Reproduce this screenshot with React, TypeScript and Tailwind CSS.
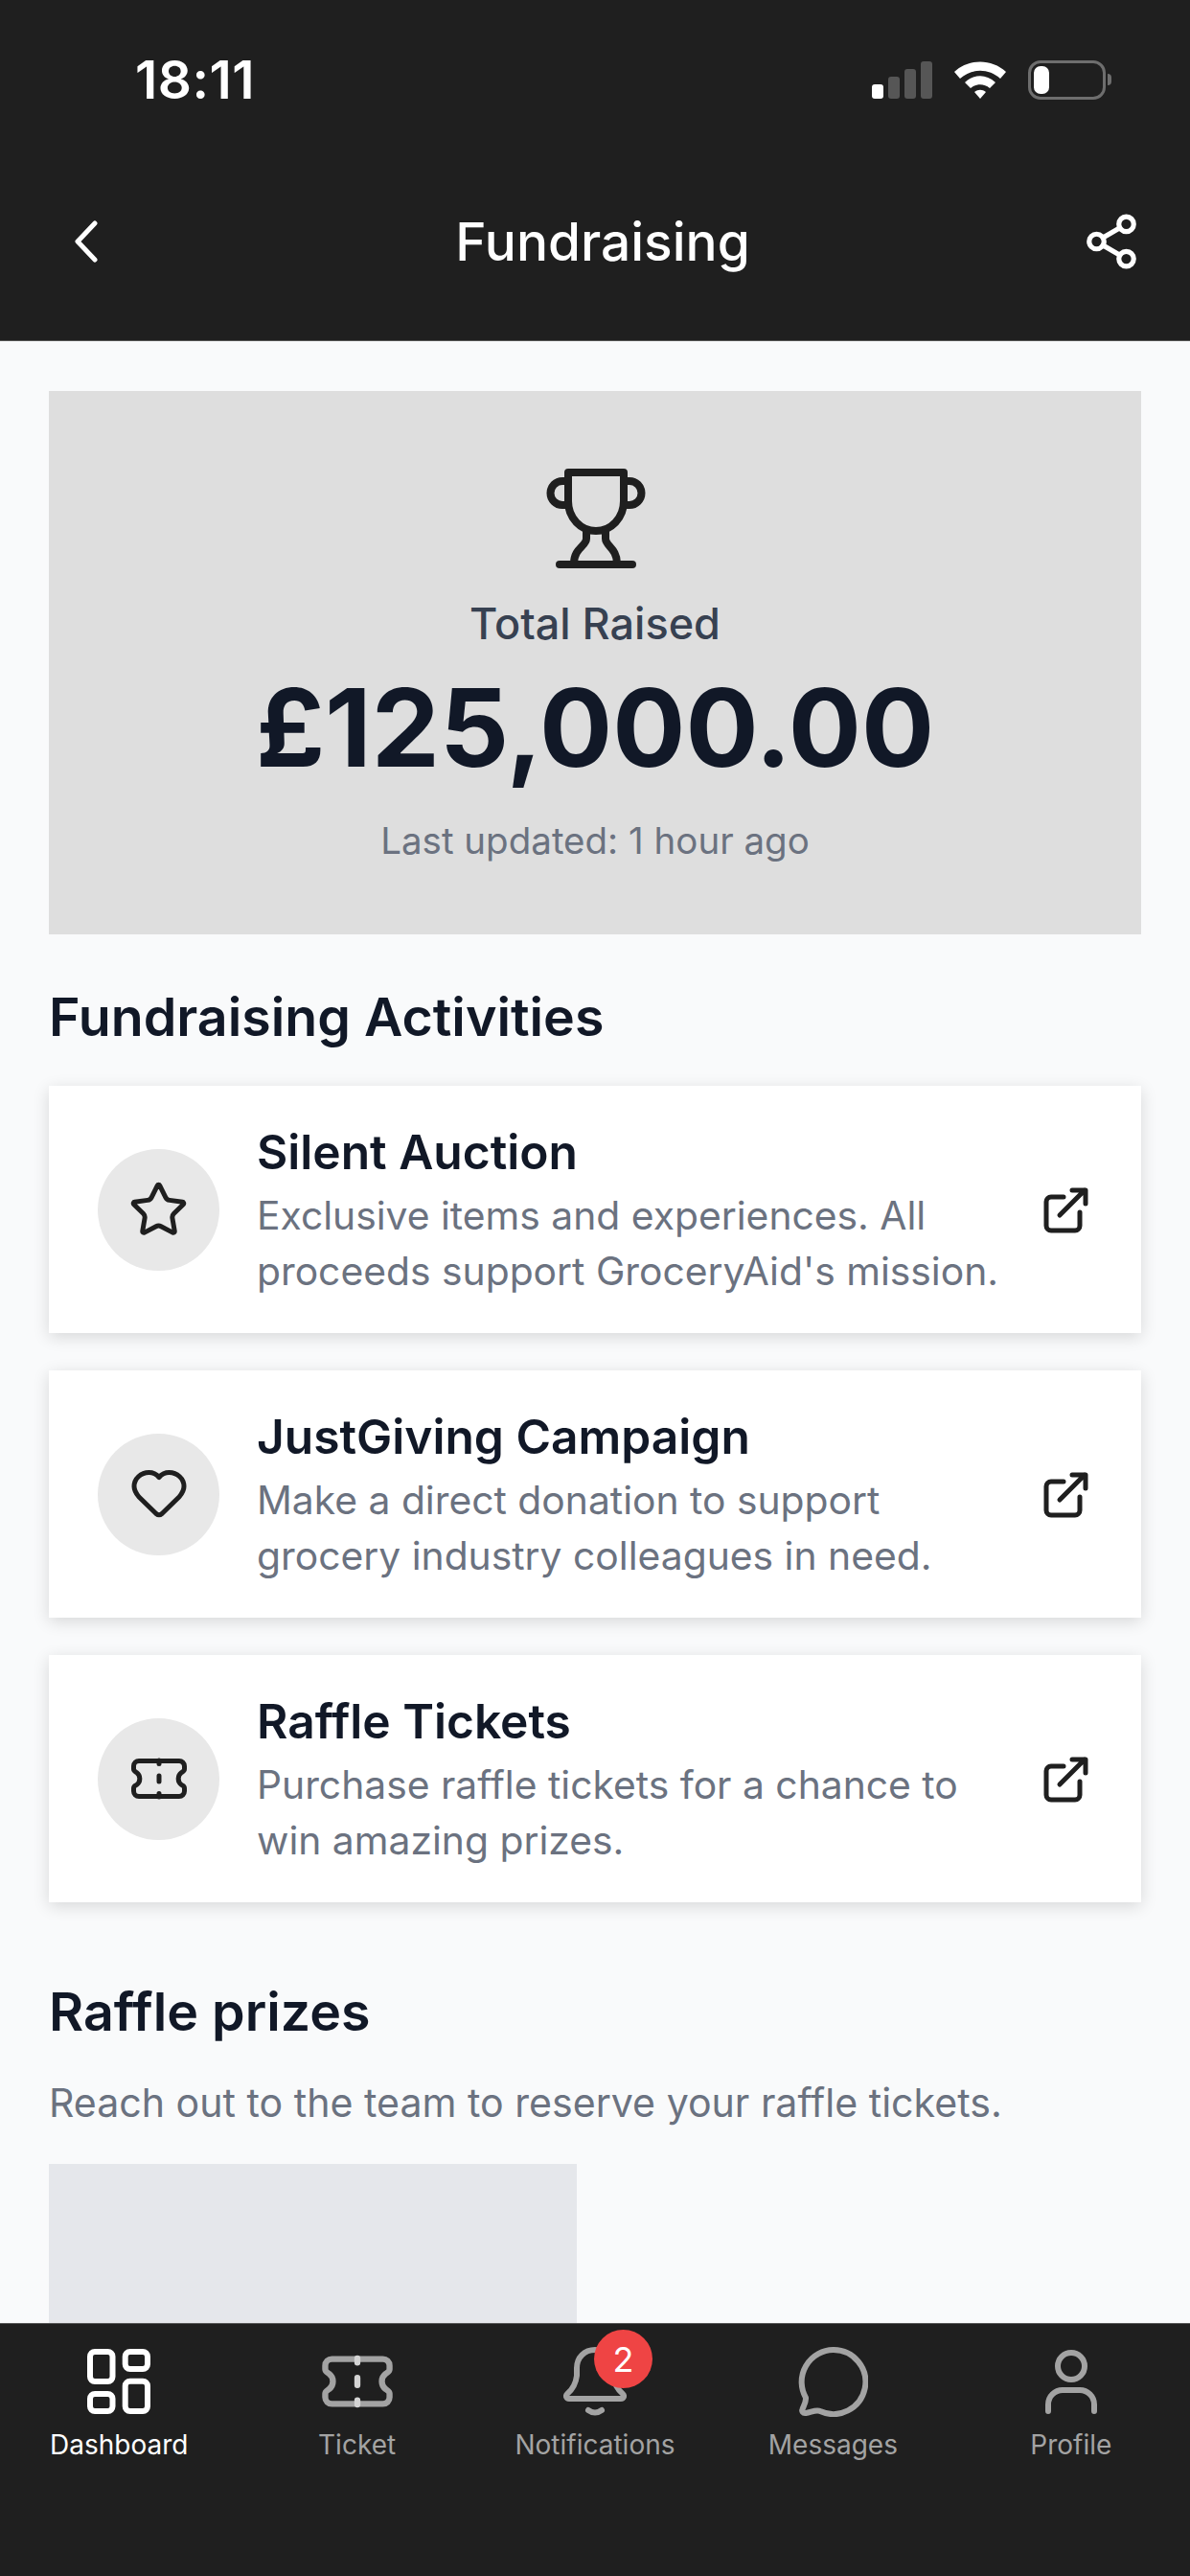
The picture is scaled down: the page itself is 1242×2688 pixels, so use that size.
import type { ReactNode } from 'react';
import { Share2, Star } from 'lucide-react';

function TicketIcon({ size, dashColor }: { size: number; dashColor?: string }) {
  return (
    <svg width={size} height={size} viewBox="0 0 60 60" fill="none" stroke="currentColor" strokeWidth="5" strokeLinecap="round" strokeLinejoin="round">
      <path d="M9 11.5H51a5.5 5.5 0 0 1 5.5 5.5V20C56.5 22 55 22.5 53.5 23.5a8 8 0 0 0 0 13C55 37.5 56.5 38 56.5 40V43a5.5 5.5 0 0 1-5.5 5.5H9a5.5 5.5 0 0 1-5.5-5.5V40C3.5 38 5 37.5 6.5 36.5a8 8 0 0 0 0-13C5 22.5 3.5 22 3.5 20V17a5.5 5.5 0 0 1 5.5-5.5z" />
      <path d="M30 11v3.5M30 27v6M30 45.5V49" stroke={dashColor ?? 'currentColor'} />
    </svg>
  );
}

function HeartIcon() {
  return (
    <svg width="60" height="60" viewBox="0 0 60 60" fill="none" stroke="currentColor" strokeWidth="5" strokeLinejoin="round">
      <path d="M30 12.5C27 9 23.5 7.5 19.5 7.5 11 7.5 4 14 4 22 4 27 6.5 30 9 33L27 50.5Q30 53 33 50.5L51 33C53.5 30 56 27 56 22 56 14 49 7.5 40.5 7.5 36.5 7.5 33 9 30 12.5Z" />
    </svg>
  );
}

function ExternalIcon() {
  return (
    <svg width="60" height="60" viewBox="0 0 60 60" fill="none" stroke="#1f1f1f" strokeWidth="5" strokeLinecap="round" strokeLinejoin="round" className="shrink-0">
      <path d="M28 17H15a5 5 0 0 0-5 5V47a5 5 0 0 0 5 5H40a5 5 0 0 0 5-5V33" />
      <path d="M24 36L50 10M37 10H51V24" />
    </svg>
  );
}

function TrophyIcon() {
  return (
    <svg width="105" height="105" viewBox="0 0 105 105" fill="none" stroke="#1f1f1f" strokeWidth="8" strokeLinecap="round" strokeLinejoin="round">
      <path d="M24 5H82V35a29 31 0 0 1-58 0z" />
      <path d="M24 14H18a12.5 12.5 0 0 0 0 25H24M82 14H88a12.5 12.5 0 0 1 0 25H82" />
      <path d="M43 66V74C43 82 30 84 30 100M63 66V74C63 82 75 84 75 100" />
      <path d="M15 101H91" />
    </svg>
  );
}

function DashboardIcon() {
  return (
    <svg width="66" height="68" viewBox="0 0 66 68" fill="none" stroke="currentColor" strokeWidth="6">
      <rect x="3" y="3" width="23.5" height="31" rx="5" />
      <rect x="39.7" y="3" width="23.3" height="18" rx="5" />
      <rect x="39.7" y="33.7" width="23.3" height="31.3" rx="5" />
      <rect x="3" y="47" width="23.5" height="18" rx="5" />
    </svg>
  );
}

function BellIcon() {
  return (
    <svg width="66" height="73" viewBox="0 0 66 73" fill="none" stroke="currentColor" strokeWidth="6" strokeLinecap="round" strokeLinejoin="round">
      <path d="M6 54H60C63 54 64 51 62 49 56 44 53 38 52 30V22C52 11 44 3 33 3 22 3 14 11 14 22V30C13 38 10 44 4 49 2 51 3 54 6 54Z" />
      <path d="M26 66Q33 71 40 66" />
    </svg>
  );
}

function MessageIcon() {
  return (
    <svg width="73" height="73" viewBox="0 0 73 73" fill="none" stroke="currentColor" strokeWidth="6" strokeLinejoin="round">
      <path d="M36.5 3A33.5 33.5 0 1 1 23 67C19 65 14 68 8 69 5 69.5 3.5 67 4.5 65 6 61 8.5 57 8 53A33.5 33.5 0 0 1 36.5 3Z" />
    </svg>
  );
}

function ProfileIcon() {
  return (
    <svg width="54" height="67" viewBox="0 0 54 67" fill="none" stroke="currentColor" strokeWidth="6" strokeLinecap="round">
      <circle cx="27" cy="17" r="14" />
      <path d="M3 64V57A15 15 0 0 1 18 42H36A15 15 0 0 1 51 57V64" />
    </svg>
  );
}

const activities = [
  { title: 'Silent Auction', lines: ['Exclusive items and experiences. All', "proceeds support GroceryAid's mission."], icon: <Star size={63} strokeWidth={1.9} /> },
  { title: 'JustGiving Campaign', lines: ['Make a direct donation to support', 'grocery industry colleagues in need.'], icon: <HeartIcon /> },
  { title: 'Raffle Tickets', lines: ['Purchase raffle tickets for a chance to', 'win amazing prizes.'], icon: <TicketIcon size={60} /> },
];

function StatusBar() {
  return (
    <div className="flex h-[165px] items-center justify-between pl-[141px] pr-[82px] pt-[1px]">
      <span className="text-[55px] font-semibold leading-none tracking-[0.5px] text-white">18:11</span>
      <div className="flex items-center gap-[22px]">
        <div className="flex items-end gap-[5px]">
          <span className="h-[15px] w-[12px] rounded-[3px] bg-white" />
          <span className="h-[23px] w-[12px] rounded-[3px] bg-[#565656]" />
          <span className="h-[31px] w-[12px] rounded-[3px] bg-[#565656]" />
          <span className="h-[39px] w-[12px] rounded-[3px] bg-[#565656]" />
        </div>
        <svg width="56" height="42" viewBox="0 0 56 42" fill="white">
          <path d="M1 13C16-1 40-1 55 13l-6 7C37 9 19 9 7 20z" />
          <path d="M12 24c10-9 22-9 32 0l-6 6c-6-5-14-5-20 0z" />
          <path d="M22 34c4-3 8-3 12 0l-6 7z" />
        </svg>
        <div className="flex items-center gap-[2px]">
          <div className="flex h-[41px] w-[81px] items-center rounded-[13px] border-[3px] border-[#6e6e6e] p-[3px]">
            <span className="h-full w-[16px] rounded-[7px] bg-white" />
          </div>
          <span className="h-[12px] w-[4px] rounded-r-full bg-[#6e6e6e]" />
        </div>
      </div>
    </div>
  );
}

function NavItem({ label, active, children }: { label: string; active?: boolean; children: ReactNode }) {
  return (
    <div className={`flex flex-col items-center ${active ? 'text-white' : 'text-[#a3a3a3]'}`}>
      <div className="relative flex h-[78px] items-center justify-center">{children}</div>
      <span className="mt-[9px] text-[28px] leading-[36px]">{label}</span>
    </div>
  );
}

export default function App() {
  return (
    <div className="flex h-[2688px] flex-col overflow-hidden bg-[#f9fafb] font-['Inter',sans-serif]">
      <header className="h-[356px] shrink-0 border-b border-[#555555] bg-[#1f1f1f]">
        <StatusBar />
        <div className="flex items-center justify-between pl-[77px] pr-[51px] pt-[49px]">
          <div className="w-[52px]">
            <svg width="26" height="44" viewBox="0 0 26 44" fill="none" stroke="white" strokeWidth="5" strokeLinecap="round" strokeLinejoin="round">
              <path d="M22 3L4 22L22 41" />
            </svg>
          </div>
          <h1 className="text-[55px] font-medium leading-[76px] text-white">Fundraising</h1>
          <Share2 size={62} strokeWidth={2} className="text-white" />
        </div>
      </header>

      <main className="min-h-0 flex-1 overflow-hidden px-[51px] pt-[52px]">
        <section className="flex h-[567px] flex-col items-center bg-[#dedede] pt-[80px]">
          <TrophyIcon />
          <p className="mt-[28px] text-[45px] font-medium leading-[60px] text-[#374151]">Total Raised</p>
          <p className="mt-[18px] text-[113px] font-bold leading-[120px] text-[#111827]">£125,000.00</p>
          <p className="mt-[30px] text-[38.5px] leading-[56px] text-[#6b7280]">Last updated: 1 hour ago</p>
        </section>

        <h2 className="mt-[50px] text-[55.5px] font-semibold leading-[72px] text-[#111827]">Fundraising Activities</h2>

        <div className="mt-[36px] flex flex-col gap-[39px]">
          {activities.map((a) => (
            <div key={a.title} className="flex h-[258px] items-center bg-white pl-[51px] pr-[49px] shadow-[0_4px_16px_rgba(0,0,0,0.14)]">
              <div className="flex h-[127px] w-[127px] shrink-0 items-center justify-center rounded-full bg-[#e8e8e8] text-[#1f1f1f]">
                {a.icon}
              </div>
              <div className="ml-[39px] min-w-0 flex-1">
                <p className="mb-[5px] text-[49.7px] font-semibold leading-[66px] text-[#111827]">{a.title}</p>
                {a.lines.map((l) => (
                  <p key={l} className="whitespace-nowrap text-[40.8px] leading-[57.4px] text-[#6b7280]">{l}</p>
                ))}
              </div>
              <ExternalIcon />
            </div>
          ))}
        </div>

        <h2 className="mt-[78px] text-[55.5px] font-semibold leading-[72px] text-[#111827]">Raffle prizes</h2>
        <p className="mt-[31px] text-[41.1px] leading-[57px] text-[#6b7280]">Reach out to the team to reserve your raffle tickets.</p>
        <div className="mt-[35px] h-[300px] w-[551px] bg-[#e5e7eb]" />
      </main>

      <nav className="grid h-[264px] shrink-0 grid-cols-5 border-t border-[#555555] bg-[#1f1f1f] pt-[21px]">
        <NavItem label="Dashboard" active><DashboardIcon /></NavItem>
        <NavItem label="Ticket"><TicketIcon size={76} dashColor="#d4d4d4" /></NavItem>
        <NavItem label="Notifications">
          <BellIcon />
          <span className="absolute left-[32px] -top-[15px] flex h-[61px] w-[61px] items-center justify-center rounded-full bg-[#ef4444] text-[36px] text-white">2</span>
        </NavItem>
        <NavItem label="Messages"><MessageIcon /></NavItem>
        <NavItem label="Profile"><ProfileIcon /></NavItem>
      </nav>
    </div>
  );
}
